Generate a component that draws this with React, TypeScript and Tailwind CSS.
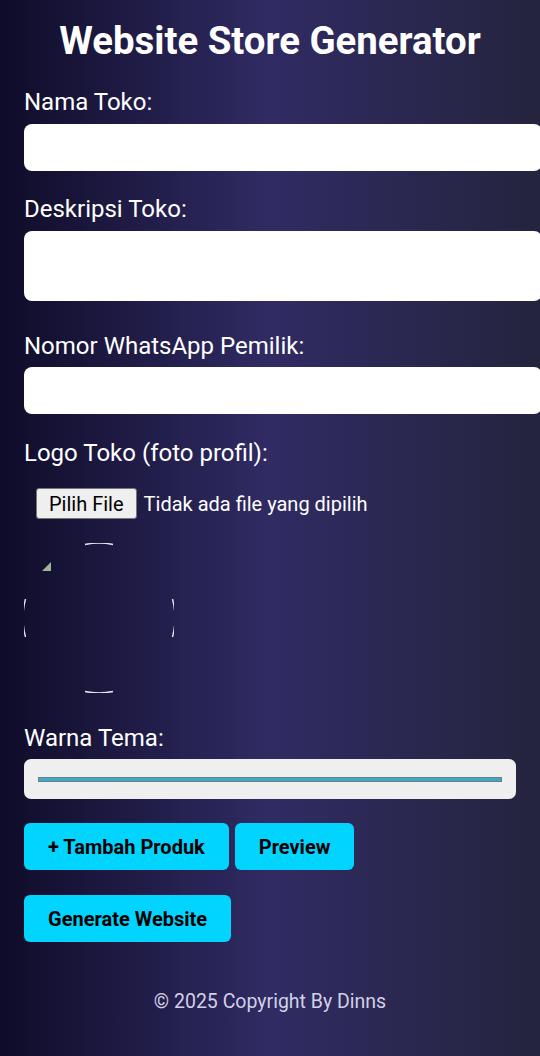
import React from 'react';

/* ── Broken logo preview (round image with nothing loaded) ── */
function LogoPreview() {
  return (
    <div className="relative w-[150px] h-[150px]">
      <svg width="150" height="150" viewBox="0 0 150 150" className="absolute inset-0">
        <path d="M61 1.5 A74 74 0 0 1 89 1.5" stroke="#e5e5ee" strokeWidth="1.4" fill="none" />
        <path d="M61 148.5 A74 74 0 0 0 89 148.5" stroke="#e5e5ee" strokeWidth="1.4" fill="none" />
        <path d="M1.5 56 A74 74 0 0 0 1.5 94" stroke="#e5e5ee" strokeWidth="1.4" fill="none" />
        <path d="M148.5 56 A74 74 0 0 1 148.5 94" stroke="#e5e5ee" strokeWidth="1.4" fill="none" />
        <path d="M18 28 L27 19 L27 28 Z" fill="#9fb59a" />
      </svg>
    </div>
  );
}

export default function App() {
  const label = 'block text-[24px] leading-[26px] text-white';
  const field =
    'block h-[47px] w-[calc(100%+26px)] rounded-[8px] bg-white border-0 outline-none';
  const btn =
    'h-[47px] rounded-[6px] bg-[#00d4ff] px-6 text-[20px] font-bold text-black';

  return (
    <div
      className="min-h-[1056px] w-full overflow-hidden bg-[linear-gradient(to_right,#0f0c29,#302b63,#24243e)] px-6 pt-[18px]"
      style={{ fontFamily: 'Roboto, "Noto Sans", sans-serif' }}
    >
      <h1 className="text-center text-[38.4px] font-bold leading-[46px] text-white">
        Website Store Generator
      </h1>

      <label className={`${label} mt-[25px]`}>Nama Toko:</label>
      <input className={`${field} mt-[9px]`} />

      <label className={`${label} mt-[25px]`}>Deskripsi Toko:</label>
      <div className="mt-[9px] h-[70px] w-[calc(100%+26px)] rounded-[8px] bg-white" />

      <label className={`${label} mt-[32px]`}>Nomor WhatsApp Pemilik:</label>
      <input className={`${field} mt-[8px]`} />

      <label className={`${label} mt-[26px]`}>Logo Toko (foto profil):</label>

      <div className="mt-[22px] ml-3 flex items-center gap-[7px]">
        <span className="flex h-[31px] items-center rounded-[3px] border border-[#767676] bg-[#efefef] px-[12px] text-[20px] text-black">
          Pilih File
        </span>
        <span className="text-[20px] text-white">Tidak ada file yang dipilih</span>
      </div>

      <div className="mt-[24px]">
        <LogoPreview />
      </div>

      <label className={`${label} mt-[32px]`}>Warna Tema:</label>
      <div className="mt-[8px] flex h-[40px] items-center rounded-[7px] bg-[#efefef] px-[14px]">
        <div className="h-[5px] w-full border border-[#6f7f88] bg-[#3ba9c4]" />
      </div>

      <div className="mt-[24px] flex gap-[6px]">
        <button className={btn}>+ Tambah Produk</button>
        <button className={btn}>Preview</button>
      </div>

      <button className={`${btn} mt-[25px]`}>Generate Website</button>

      <p className="mt-[45px] text-center text-[19.5px] text-[#d2d0e6]">
        © 2025 Copyright By Dinns
      </p>
    </div>
  );
}
